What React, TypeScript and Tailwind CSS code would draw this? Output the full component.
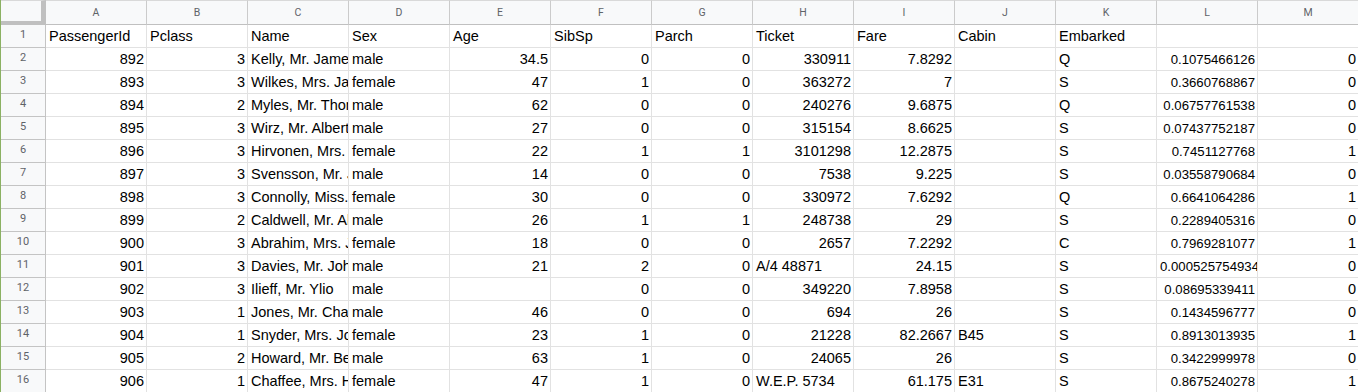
const COLS = ['A', 'B', 'C', 'D', 'E', 'F', 'G', 'H', 'I', 'J', 'K', 'L', 'M'];

// each row: values for A..M; numbers render right-aligned like Sheets does
type V = string | number | null;

const ROWS: V[][] = [
  ['PassengerId', 'Pclass', 'Name', 'Sex', 'Age', 'SibSp', 'Parch', 'Ticket', 'Fare', 'Cabin', 'Embarked', null, null],
  [892, 3, 'Kelly, Mr. James', 'male', 34.5, 0, 0, 330911, 7.8292, null, 'Q', '0.1075466126', 0],
  [893, 3, 'Wilkes, Mrs. James (Ellen Needs)', 'female', 47, 1, 0, 363272, 7, null, 'S', '0.3660768867', 0],
  [894, 2, 'Myles, Mr. Thomas Francis', 'male', 62, 0, 0, 240276, 9.6875, null, 'Q', '0.06757761538', 0],
  [895, 3, 'Wirz, Mr. Albert', 'male', 27, 0, 0, 315154, 8.6625, null, 'S', '0.07437752187', 0],
  [896, 3, 'Hirvonen, Mrs. Alexander (Helga E Lindqvist)', 'female', 22, 1, 1, 3101298, 12.2875, null, 'S', '0.7451127768', 1],
  [897, 3, 'Svensson, Mr. Johan Cervin', 'male', 14, 0, 0, 7538, 9.225, null, 'S', '0.03558790684', 0],
  [898, 3, 'Connolly, Miss. Kate', 'female', 30, 0, 0, 330972, 7.6292, null, 'Q', '0.6641064286', 1],
  [899, 2, 'Caldwell, Mr. Albert Francis', 'male', 26, 1, 1, 248738, 29, null, 'S', '0.2289405316', 0],
  [900, 3, 'Abrahim, Mrs. Joseph (Sophie Halaut Easu)', 'female', 18, 0, 0, 2657, 7.2292, null, 'C', '0.7969281077', 1],
  [901, 3, 'Davies, Mr. John Samuel', 'male', 21, 2, 0, 'A/4 48871', 24.15, null, 'S', '0.000525754934', 0],
  [902, 3, 'Ilieff, Mr. Ylio', 'male', null, 0, 0, 349220, 7.8958, null, 'S', '0.08695339411', 0],
  [903, 1, 'Jones, Mr. Charles Cresson', 'male', 46, 0, 0, 694, 26, null, 'S', '0.1434596777', 0],
  [904, 1, 'Snyder, Mrs. John Pillsbury (Nelle Stevenson)', 'female', 23, 1, 0, 21228, 82.2667, 'B45', 'S', '0.8913013935', 1],
  [905, 2, 'Howard, Mr. Benjamin', 'male', 63, 1, 0, 24065, 26, null, 'S', '0.3422999978', 0],
  [906, 1, 'Chaffee, Mrs. Herbert Fuller (Carrie Constance Toogood)', 'female', 47, 1, 0, 'W.E.P. 5734', 61.175, 'E31', 'S', '0.8675240278', 1],
];

function Cell({ value, col }: { value: V; col: number }) {
  const isL = col === 11;
  const numeric = typeof value === 'number' || (isL && value !== null);
  // too long for the column: Sheets shows it from the left and clips
  const overflow = isL && typeof value === 'string' && value.length > 13;
  const right = numeric && !overflow;
  return (
    <div
      className={`w-[101px] shrink-0 h-[23px] border-r border-b border-[#e2e2e2] overflow-hidden whitespace-nowrap leading-[16px] flex ${
        right ? 'justify-end pr-[2px]' : 'justify-start pl-[3px]'
      } ${isL ? 'text-[13.2px] pt-[4px]' : 'text-[14.5px] pt-[3px]'}`}
    >
      {value === null ? '' : String(value)}
    </div>
  );
}

export default function App() {
  return (
    <div className="w-[1358px] h-[392px] overflow-hidden bg-white text-black font-['Liberation_Sans',Arial,sans-serif]">
      <div className="border-l border-[#8bb163] w-max">
        {/* column letters */}
        <div className="flex">
          <div className="w-[45px] h-[25px] shrink-0 bg-[#f8f9fa] border-t border-t-[#d9d9d9] border-r-[5px] border-b-[4px] border-r-[#c0c0c0] border-b-[#c0c0c0]" />
          {COLS.map((c) => (
            <div
              key={c}
              className="w-[101px] h-[25px] shrink-0 bg-[#f8f9fa] border-t border-t-[#d9d9d9] border-r border-r-[#cbcbcb] border-b border-b-[#c0c0c0] flex items-center justify-center text-[10.5px] text-[#5f6368] font-['Roboto',sans-serif]"
            >
              {c}
            </div>
          ))}
        </div>

        {ROWS.map((row, r) => (
          <div key={r} className="flex">
            <div className="w-[45px] h-[23px] shrink-0 bg-[#f8f9fa] border-r border-b border-[#c4c4c4] flex items-center justify-center pb-[2px] text-[11px] text-[#5f6368] font-['Roboto',sans-serif]">
              {r + 1}
            </div>
            {row.map((v, c) => (
              <Cell key={c} value={v} col={c} />
            ))}
          </div>
        ))}
      </div>
    </div>
  );
}
